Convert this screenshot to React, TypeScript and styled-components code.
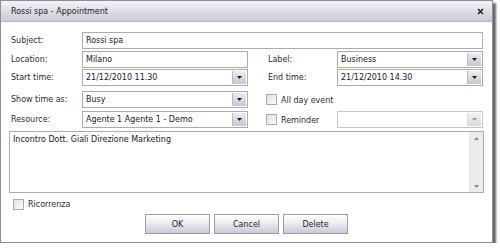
import React from "react";
import styled, { createGlobalStyle } from "styled-components";

const GlobalStyle = createGlobalStyle`
  html, body {
    margin: 0;
    padding: 0;
    background: #ffffff;
  }
  body {
    font-family: "DejaVu Sans Condensed", "DejaVu Sans", "Liberation Sans", sans-serif;
    font-size: 8.9px;
    color: #2b2b2b;
  }
`;

const Dialog = styled.div`
  width: 491px;
  height: 241px;
  border: 1px solid #8e8e96;
  background: #ffffff;
  box-shadow: 3px 3px 2px rgba(40, 40, 40, 0.7);
  display: flex;
  flex-direction: column;
`;

const TitleBar = styled.div`
  height: 20px;
  flex-shrink: 0;
  display: flex;
  align-items: center;
  justify-content: space-between;
  padding: 0 8px 0 10px;
  background: linear-gradient(#f3f3f7, #d6d6e2 70%, #cacad8);
  border-bottom: 1px solid #b4b4c6;
  color: #1e1e1e;
`;

const CloseIcon = () => (
  <svg width="7" height="7" viewBox="0 0 7 7">
    <path d="M1 1 L6 6 M6 1 L1 6" stroke="#222" strokeWidth="1.6" />
  </svg>
);

const Body = styled.div`
  flex: 1;
  padding: 10px 8px 0 8px;
  display: flex;
  flex-direction: column;
`;

const FormGrid = styled.div`
  display: grid;
  grid-template-columns: 73px 166px 18px 71px 146px;
  grid-template-rows: 19px 18px 22px 20px 20px;
  align-items: start;
`;

const Label = styled.div<{ $col: number }>`
  grid-column: ${(p) => p.$col};
  height: 17px;
  line-height: 17px;
  padding-left: 2px;
  white-space: nowrap;
`;

const TextBox = styled.div<{ $span?: boolean }>`
  grid-column: ${(p) => (p.$span ? "2 / 6" : "auto")};
  height: 15px;
  border: 1px solid #a9a9c2;
  background: #fff;
  line-height: 15px;
  padding-left: 3px;
  color: #202020;
  white-space: nowrap;
`;

const Combo = styled.div<{ $disabled?: boolean }>`
  height: 15px;
  border: 1px solid ${(p) => (p.$disabled ? "#c4c4d2" : "#a9a9c2")};
  background: #fff;
  display: flex;
  align-items: center;
`;

const ComboText = styled.div`
  flex: 1;
  padding-left: 3px;
  line-height: 15px;
  color: #202020;
  white-space: nowrap;
  overflow: hidden;
`;

const DropButton = styled.div<{ $disabled?: boolean }>`
  width: 13px;
  height: 13px;
  margin-right: 1px;
  display: flex;
  align-items: center;
  justify-content: center;
  background: ${(p) =>
    p.$disabled
      ? "linear-gradient(#f2f2f2, #dcdcdc)"
      : "linear-gradient(#ececf2, #c6c6d6)"};
  border-left: 1px solid ${(p) => (p.$disabled ? "#dadada" : "#b8b8cc")};
`;

const Arrow = ({ color = "#1a1a1a", up = false }: { color?: string; up?: boolean }) => (
  <svg width="5" height="3" viewBox="0 0 5 3">
    <path d={up ? "M0 3 L5 3 L2.5 0 Z" : "M0 0 L5 0 L2.5 3 Z"} fill={color} />
  </svg>
);

const Check = styled.span`
  display: inline-block;
  width: 9px;
  height: 9px;
  border: 1px solid #a8a8b0;
  background: linear-gradient(135deg, #e2e2e6, #fafafa);
  flex-shrink: 0;
`;

const CheckField = styled.div<{ $col: number }>`
  grid-column: ${(p) => p.$col};
  height: 17px;
  display: flex;
  align-items: center;
  gap: 4px;
  white-space: nowrap;
`;

const Notes = styled.div`
  height: 60px;
  border: 1px solid #a9a9c2;
  display: flex;
`;

const NotesText = styled.div`
  flex: 1;
  padding: 2px 3px;
  color: #202020;
`;

const ScrollBar = styled.div`
  width: 13px;
  background: #ececec;
  border-left: 1px solid #e2e2e2;
  display: flex;
  flex-direction: column;
  justify-content: space-between;
  align-items: center;
  padding: 5px 0 4px;
`;

const Recurrence = styled.div`
  margin-top: 5px;
  padding-left: 4px;
  height: 12px;
  display: flex;
  align-items: center;
  gap: 4px;
`;

const ButtonRow = styled.div`
  margin-top: 4px;
  display: flex;
  justify-content: center;
  gap: 4px;
`;

const Button = styled.button`
  width: 65px;
  height: 20px;
  border: 1px solid #9c9ca8;
  background: linear-gradient(#ffffff, #ececf2 45%, #c9c9da);
  font-family: inherit;
  font-size: 8.9px;
  color: #1e1e1e;
  padding: 0;
`;

type ComboProps = { value: string; disabled?: boolean; col?: number };

const ComboBox = ({ value, disabled, col }: ComboProps) => (
  <Combo $disabled={disabled} style={col ? { gridColumn: col } : undefined}>
    <ComboText>{value}</ComboText>
    <DropButton $disabled={disabled}>
      <Arrow color={disabled ? "#9a9a9a" : "#1a1a1a"} />
    </DropButton>
  </Combo>
);

export default function App() {
  return (
    <>
      <GlobalStyle />
      <Dialog>
        <TitleBar>
          <span>Rossi spa - Appointment</span>
          <CloseIcon />
        </TitleBar>
        <Body>
          <FormGrid>
            <Label $col={1}>Subject:</Label>
            <TextBox $span>Rossi spa</TextBox>

            <Label $col={1}>Location:</Label>
            <TextBox>Milano</TextBox>
            <Label $col={4}>Label:</Label>
            <ComboBox value="Business" col={5} />

            <Label $col={1}>Start time:</Label>
            <ComboBox value="21/12/2010 11.30" />
            <Label $col={4}>End time:</Label>
            <ComboBox value="21/12/2010 14.30" col={5} />

            <Label $col={1}>Show time as:</Label>
            <ComboBox value="Busy" />
            <CheckField $col={4}>
              <Check />
              All day event
            </CheckField>

            <Label $col={1}>Resource:</Label>
            <ComboBox value="Agente 1 Agente 1 - Demo" />
            <CheckField $col={4}>
              <Check />
              Reminder
            </CheckField>
            <ComboBox value="" disabled col={5} />
          </FormGrid>

          <Notes>
            <NotesText>Incontro Dott. Giali Direzione Marketing</NotesText>
            <ScrollBar>
              <Arrow up color="#8a8a8a" />
              <Arrow color="#8a8a8a" />
            </ScrollBar>
          </Notes>

          <Recurrence>
            <Check />
            Ricorrenza
          </Recurrence>

          <ButtonRow>
            <Button>OK</Button>
            <Button>Cancel</Button>
            <Button>Delete</Button>
          </ButtonRow>
        </Body>
      </Dialog>
    </>
  );
}
